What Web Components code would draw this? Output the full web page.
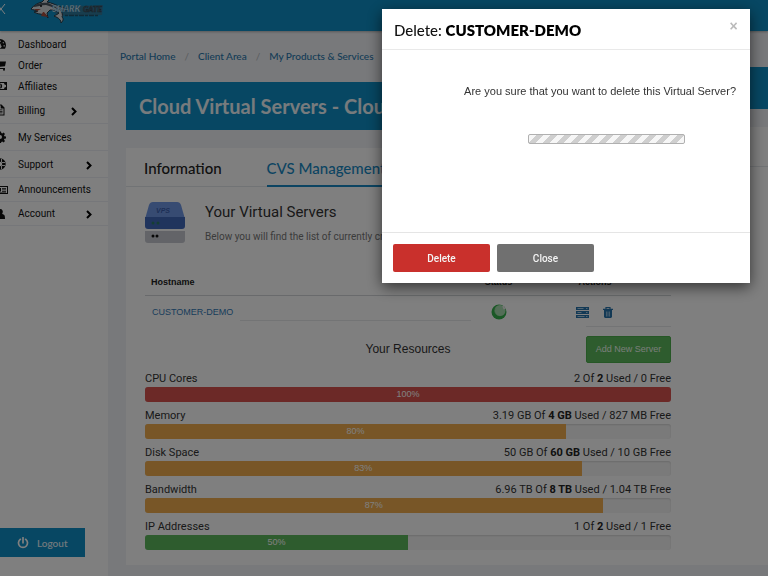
<!DOCTYPE html>
<html lang="en">
<head>
<meta charset="utf-8">
<title>Cloud Virtual Servers</title>
<style>
html, body { margin: 0; min-height: 100vh; }
body { font-family: Roboto, "Liberation Sans", sans-serif; color: #333; background: #f0f2f6; overflow: hidden; }
</style>
</head>
<body>
<client-portal></client-portal>
<script>
const define = (name, html, setup) => {
  const tpl = document.createElement('template');
  tpl.innerHTML = '<style>*{box-sizing:border-box}</style>' + html;
  customElements.define(name, class extends HTMLElement {
    constructor() {
      super();
      this.attachShadow({ mode: 'open' }).append(tpl.content.cloneNode(true));
    }
    connectedCallback() { if (setup) setup(this, this.shadowRoot); }
  });
};

const ICONS = {
  gauge: '<path fill-rule="evenodd" d="M6 1a6 6 0 0 0-6 6c0 1.500.4 2.700 1 3.800h10c.6-1.100 1-2.300 1-3.800a6 6 0 0 0-6-6zM6 2.200l1 1-1 1-1-1zM2.500 4l1 .6-.6 1-1-.6zM9.500 4l-1 .6.6 1 1-.6zM7.300 4.700l-.6 2.600a1.500 1.500 0 1 1-1-.2zM1.200 7.200h1.400v1.200H1.200zM9.500 7.200h1.300v1.200H9.500z"/>',
  cart: '<path d="M0 1.500h2.300l.4 1H12l-1 4.800-7.200.8.2.8h7v1H3.200L1.600 2.500H0z"/><circle cx="4.200" cy="10.800" r="1"/><circle cx="10" cy="10.800" r="1"/>',
  money: '<path fill-rule="evenodd" d="M-1 2h14v8H-1zM2 3a2 2 0 0 1-2 2v2a2 2 0 0 1 2 2h8a2 2 0 0 1 2-2V5a2 2 0 0 1-2-2z"/><ellipse cx="6" cy="6" rx="2.200" ry="2.600" /><path d="M5.700 4.500h.8v3h-.8z" fill="#fff"/>',
  file: '<path fill-rule="evenodd" d="M1.500.5h6L10.500 3.500v8h-9zM2.500 1.500v9h7V4.500H6.700v-3zM3.500 5.500h5v.8h-5zM3.500 7h5v.8h-5zM3.500 8.500h5v.8h-5z"/>',
  cog: '<path fill-rule="evenodd" d="M5 .5h2l.3 1.600 1 .4 1.300-1 1.400 1.400-1 1.300.4 1 1.600.3v2l-1.600.3-.4 1 1 1.300L9.600 11.500l-1.300-1-1 .4L7 12H5l-.3-1.600-1-.4-1.300 1L1 9.600l1-1.300-.4-1L0 7V5l1.600-.3.4-1-1-1.300L2.400 1l1.300 1 1-.4zM6 4a2 2 0 1 0 0 4 2 2 0 0 0 0-4z"/>',
  ring: '<circle cx="6" cy="6" r="4" fill="none" stroke="currentColor" stroke-width="3.400"/><path d="M1 4.500h3M1 7.500h3M8 4.500h3M8 7.500h3M4.500 1v3M7.500 1v3M4.500 8v3M7.500 8v3" stroke="#fff" stroke-width=".9"/>',
  news: '<path fill-rule="evenodd" d="M-1 2h15v8H0V3h-1zM1 3v6h12V3zM2 4h5v3.500H2zM8 4h4v.8H8zM8 5.500h4v.8H8zM8 7h4v.8H8zM2 8h10v.6H2z"/>',
  user: '<path d="M6 1a2.700 2.700 0 0 1 2.200 4.400C8 6 8.600 6.300 9.500 6.600c1.300.4 1.500 2.400 1.500 4.400H1c0-2 .2-4 1.500-4.400.9-.3 1.500-.6 1.300-1.200A2.700 2.700 0 0 1 6 1z"/>',
  power: '<path d="M3.400 2.300a4.500 4.500 0 1 0 5.200 0M6 .6v5.200" fill="none" stroke="currentColor" stroke-width="1.700" stroke-linecap="round"/>',
};

define('nav-item', `
<style>
:host { display: block; height: 21px; border-bottom: 1px solid #eceff5; }
:host([menu]), :host([tall]) { height: 27px; }
:host([mid]) { height: 24px; }
a { display: flex; align-items: center; height: 100%; color: #111; text-decoration: none; font-size: 10px; }
svg { width: 12px; height: 12px; margin: 0 12px 0 -6px; overflow: visible; fill: currentColor; flex: none; }
.arrow { display: none; width: 6px; height: 9px; margin: 2px 0 0 auto; fill: none; stroke: #000; stroke-width: 2; }
:host([menu]) .arrow { display: block; margin-right: 16px; }
:host([menu][near]) .arrow { margin-right: 31px; }
</style>
<a href="#"><svg class="icon" viewBox="0 0 12 12"></svg><slot></slot><svg class="arrow" viewBox="0 0 6 9"><path d="M1 1l3.500 3.500L1 8"/></svg></a>`,
(el, root) => { root.querySelector('.icon').innerHTML = ICONS[el.getAttribute('icon')]; });

define('side-nav', `
<style>
:host { display: flex; flex-direction: column; background: #fff; padding: 3px 0 19px; }
.logout { margin-top: auto; align-self: flex-start; width: 79%; height: 29px; border: 0; padding: 0 0 0 17px; display: flex; align-items: center; gap: 8px; background: #0e8fc7; color: #e8f4fa; font: 500 10px Lato, sans-serif; }
.logout svg { width: 12px; height: 12px; color: #fff; }
</style>
<nav>
<nav-item icon="gauge">Dashboard</nav-item>
<nav-item icon="cart">Order</nav-item>
<nav-item icon="money">Affiliates</nav-item>
<nav-item icon="file" menu near>Billing</nav-item>
<nav-item icon="cog" tall>My Services</nav-item>
<nav-item icon="ring" menu>Support</nav-item>
<nav-item icon="news" mid>Announcements</nav-item>
<nav-item icon="user" menu mid>Account</nav-item>
</nav>
<button class="logout"><svg viewBox="0 0 12 12">${ICONS.power}</svg>Logout</button>`);

define('top-bar', `
<style>
:host { display: flex; height: 31px; background: #0e8fc6; box-shadow: 0 1px 2px #0004; position: relative; }
button { width: 6px; height: 14px; margin: 2px 0 0; padding: 0; border: 0; background: none; overflow: hidden; }
button svg { display: block; width: 9px; height: 14px; margin-left: -3px; stroke: #fff; fill: none; }
.logo { width: 74px; height: 26px; margin-left: 25px; overflow: visible; }
</style>
<button aria-label="Close menu"><svg viewBox="0 0 9 14"><path d="M0 2l8 10M8 2L0 12"/></svg></button>
<svg class="logo" viewBox="0 0 74 26" role="img">
<path d="M20 7L72 5l-1 10-45 1z" fill="#3f708c" opacity=".7"/>
<path d="M0 9C3 5 7 3 11 2L14-1h5l-3 3c5 1 9 3 14 5 3 1 5 2 7 3l-7 0c1 3 2 5 1 7 2 2 1 4-1 6 0-3-2-5-7-7 2-1 4-2 5-3-3-2-5-3-9-3l-3 3 1 5-3-4C9 15 5 13 3 12l4-1C4 10 2 10 0 9z" fill="#d7dadd" stroke="#263744" stroke-width="1"/>
<path d="M1 7c5-4 11-5 16-4 5 2 7 4 13 7-7-2-11-4-15-5C11 5 6 7 1 7z" fill="#4b5660"/>
<path d="M3 9l7 0-4 2zM13 12l4 5-7-1 2-4z" fill="#a84c3c"/>
<circle cx="10" cy="6" r="1" fill="#111"/>
<text x="21" y="12" font-family="Lato, sans-serif" font-weight="900" font-style="italic" font-size="9" fill="#eaf6fc" stroke="#1480b4" stroke-width=".4">SHARK</text>
<text x="52" y="12" font-family="Lato, sans-serif" font-weight="900" font-style="italic" font-size="8" fill="#647886" stroke="#2c4453" stroke-width=".6">GATE</text>
<path d="M34 15.500h34" stroke="#20556f" stroke-width="1.500" stroke-dasharray="3 1 5 1"/>
</svg>`);

define('bread-crumbs', `
<style>
:host { display: block; padding: 0 12px; height: 51px; }
ol { margin: 0; padding: 0; display: flex; align-items: center; height: 50px; list-style: none; white-space: nowrap; font: 10px Lato, sans-serif; }
li + li::before { content: "/"; color: #b5bac0; padding: 0 9px; }
a { color: #2a78ad; text-decoration: none; font-weight: 500; }
</style>
<ol><li><a href="#">Portal Home</a></li><li><a href="#">Client Area</a></li><li><a href="#">My Products &amp; Services</a></li></ol>`);

define('page-banner', `
<style>
:host { display: block; background: #0e8fc6; margin-left: 18px; }
h1 { margin: 0; padding: 0 13px; font: 700 20px/48px Lato, sans-serif; color: #eef6fb; white-space: nowrap; overflow: hidden; }
</style>
<h1><slot></slot></h1>`);

define('usage-bar', `
<style>
:host { display: block; }
.row { display: flex; justify-content: space-between; font-size: 11px; line-height: 16px; height: 16px; color: #333; }
.track { height: 15px; border-radius: 3px; background: #f5f5f5; box-shadow: inset 0 1px 2px #0002; overflow: hidden; }
.fill { height: 15px; font: 9px/15px "Liberation Sans", sans-serif; color: #fff; text-align: center; }
</style>
<div class="row"><span class="label"></span><span><slot></slot></span></div>
<div class="track"><div class="fill"></div></div>`,
(el, root) => {
  const v = el.getAttribute('value'), fill = root.querySelector('.fill');
  root.querySelector('.label').textContent = el.getAttribute('label');
  fill.textContent = v + '%';
  fill.style.width = v + '%';
  fill.style.background = v >= 100 ? '#d9534f' : v > 50 ? '#f0ad4e' : '#5cb85c';
});

define('server-table', `
<style>
:host { display: block; }
table { width: 100%; border-collapse: collapse; table-layout: fixed; font: 9px "Liberation Sans", sans-serif; }
th { height: 25px; padding: 0; border-bottom: 1px solid #d2d5d9; color: #222; }
td { height: 34px; padding: 0; text-align: center; }
th:first-child { text-align: left; padding-left: 6px; }
td:first-child { text-align: left; padding-left: 7px; background: linear-gradient(#e6e8ea, #e6e8ea) 100% 24px / 71% 1px no-repeat; }
th:last-child, td:last-child { padding-right: 10px; }
td:last-child { background: linear-gradient(#e6e8ea, #e6e8ea) 100% 30px / 60% 1px no-repeat; }
.host { width: 62%; } .state { width: 11%; }
.state, .led { padding-right: 3px; }
a { color: #337ab7; text-decoration: none; }
.acts { display: flex; justify-content: center; align-items: center; gap: 14px; }
button { border: 0; background: none; padding: 0; display: block; }
svg { display: block; margin: auto; }
</style>
<table>
<thead><tr><th class="host">Hostname</th><th class="state">Status</th><th>Actions</th></tr></thead>
<tbody><tr>
<td><a href="#">CUSTOMER-DEMO</a></td>
<td class="led"><svg width="16" height="16" viewBox="0 0 16 16" role="img" aria-label="Running"><circle cx="8" cy="8" r="7.500" fill="#35b04c"/><circle cx="9" cy="6.500" r="5.500" fill="#a9dcb0"/><path d="M3.500 7a5.500 5.500 0 0 0 8 4.500A5 5 0 0 1 6 3.200 5 5 0 0 0 3.500 7z" fill="#72c77f"/><path d="M12 2l1 2.500 1.500-.5" fill="none" stroke="#eee" stroke-width="1.500"/></svg></td>
<td><div class="acts">
<button aria-label="Manage"><svg width="13" height="11" viewBox="0 0 13 11"><path d="M0 0h13v3H0zM0 4h13v3H0zM0 8h13v3H0z" fill="#2673ab"/><path d="M1.500 1.500h6M1.500 5.500h4M1.500 9.500h7M10 1.500h1.500M10 5.500h1.500M10 9.500h1.500" stroke="#a9cbe2"/></svg></button>
<button aria-label="Delete"><svg width="10" height="11" viewBox="0 0 10 11"><path d="M3 2V.5h4V2M0 2.300h10" fill="none" stroke="#2673ab" stroke-width="1.200"/><path d="M1 3h8v7l-1 1H2l-1-1z" fill="#2673ab"/><path d="M3.500 4.500v5M5 4.500v5M6.500 4.500v5" stroke="#b8d4e8" stroke-width=".7"/></svg></button>
</div></td>
</tr></tbody>
</table>`);

define('server-card', `
<style>
:host { display: block; margin: 18px 0 0 18px; background: #fff; }
.tabs { display: flex; gap: 45px; padding-left: 18px; height: 39px; border-bottom: 1px solid #e3e6ea; font: 500 15px Lato, sans-serif; }
.tabs button { border: 0; border-bottom: 2px solid transparent; background: none; padding: 3px 0 0; font: inherit; color: #222; white-space: nowrap; height: 39px; }
.tabs .on { color: #1889c4; border-color: #1889c4; padding-right: 12px; }
.body { padding: 15px 37px 15px 19px; }
.intro { display: grid; grid-template-columns: 40px 1fr; column-gap: 20px; height: 68px; }
.intro svg { display: block; width: 40px; height: 41px; }
h2 { margin: 0; font-size: 15px; line-height: 20px; font-weight: 400; color: #333; }
p { margin: 8px 0 0; font-size: 10px; line-height: 14px; color: #777; white-space: nowrap; overflow: hidden; }
.head { display: grid; grid-template-columns: 1fr auto 1fr; align-items: center; margin-top: 6px; height: 28px; }
h3 { grid-column: 2; margin: 0; font: 12px "Liberation Sans", sans-serif; color: #333; }
.head button { justify-self: end; width: 85px; height: 27px; border: 1px solid #4cae4c; border-radius: 2px; background: #5cb85c; color: #f2fbf2; font: 9px "Liberation Sans", sans-serif; padding: 0; white-space: nowrap; }
.bars { display: grid; gap: 6px; margin-top: 8px; }
b { color: #222; }
</style>
<div class="tabs"><button>Information</button><button class="on">CVS Management</button></div>
<div class="body">
<div class="intro">
<svg viewBox="0 0 40 41" role="img"><path d="M4 3q1-3 4-3h24q3 0 4 3l4 14H0z" fill="#6f96e4"/><path d="M0 15h40v9q0 3-3 3H3q-3 0-3-3z" fill="#4169bb"/><path d="M0 29h40v9q0 3-3 3H3q-3 0-3-3z" fill="#c6c9d0"/><text x="11" y="11" font-family="Liberation Sans" font-style="italic" font-weight="700" font-size="7" fill="#3a5fae">VPS</text><g fill="#2b7d66"><circle cx="8" cy="21" r="1.500"/><circle cx="13" cy="21" r="1.500"/></g><g fill="#111"><circle cx="8" cy="34" r="1.500"/><circle cx="12" cy="34" r="1.500"/></g></svg>
<div><h2>Your Virtual Servers</h2><p>Below you will find the list of currently created servers.</p></div>
</div>
<server-table></server-table>
<div class="head"><h3>Your Resources</h3><button>Add New Server</button></div>
<div class="bars">
<usage-bar label="CPU Cores" value="100">2 Of <b>2</b> Used / 0 Free</usage-bar>
<usage-bar label="Memory" value="80">3.19 GB Of <b>4 GB</b> Used / 827 MB Free</usage-bar>
<usage-bar label="Disk Space" value="83">50 GB Of <b>60 GB</b> Used / 10 GB Free</usage-bar>
<usage-bar label="Bandwidth" value="87">6.96 TB Of <b>8 TB</b> Used / 1.04 TB Free</usage-bar>
<usage-bar label="IP Addresses" value="50">1 Of <b>2</b> Used / 1 Free</usage-bar>
</div>
</div>`);

define('page-edge', `
<style>
:host { display: grid; grid-template-rows: 36px 42px 18px 40px 1fr; }
.band { grid-row: 2; background: #0e8fc6; }
.tabline { grid-row: 4; background: #fff; border-bottom: 1px solid #e3e6ea; }
.fill { grid-row: 5; background: #fff; }
</style>
<div class="band"></div><div class="tabline"></div><div class="fill"></div>`);

define('confirm-dialog', `
<style>
:host { position: fixed; inset: 0; background: #00000080; padding: 9px 18px; display: flex; align-items: flex-start; justify-content: flex-end; }
section { width: calc(50% + 2px); background: #fff; box-shadow: 0 4px 14px #00000099; }
header { display: flex; justify-content: space-between; height: 41px; padding: 0 12px; border-bottom: 1px solid #e9e9e9; }
h2 { margin: 0; font: 500 15px/42px Lato, sans-serif; color: #111; }
h2 ::slotted(b) { font-weight: 800; color: #000; }
.x { border: 0; background: none; padding: 0; width: 9px; height: 35px; font: 700 14px/35px "Liberation Sans", sans-serif; color: #bbb; }
.body { height: 182px; padding: 34px 14px 0; display: flex; flex-direction: column; align-items: flex-end; }
p { margin: 0; font: 11px/15px "Liberation Sans", sans-serif; color: #333; }
.wait { width: 157px; height: 10px; margin: 35px 51px 0 0; border: 1px solid #b0b0b0; border-radius: 2px; background: repeating-linear-gradient(135deg, #f6f6f6 0 5px, #cfcfcf 5px 10px); }
footer { display: flex; gap: 7px; padding: 11px 11px 11px; border-top: 1px solid #e5e5e5; }
footer button { width: 97px; height: 28px; border: 0; border-radius: 2px; font: 500 10px Roboto, sans-serif; color: #f4f4f4; background: #707070; padding: 0; }
footer .danger { background: #c9302c; }
</style>
<section role="dialog" aria-modal="true" aria-labelledby="t">
<header><h2 id="t"><slot name="title"></slot></h2><button class="x" aria-label="Close dialog">×</button></header>
<div class="body"><p><slot></slot></p><div class="wait" role="progressbar" aria-label="Working"></div></div>
<footer><button class="danger">Delete</button><button>Close</button></footer>
</section>`);

define('client-portal', `
<style>
:host { display: grid; grid-template: auto 1fr / 108px 1fr; min-height: 100vh; }
top-bar { grid-column: 1 / -1; z-index: 1; }
main { display: grid; grid-template-columns: 1fr 60px; padding-bottom: 11px; align-content: start; min-width: 0; }
.col { min-width: 0; }
confirm-dialog { z-index: 2; }
</style>
<top-bar></top-bar>
<side-nav></side-nav>
<main>
<div class="col">
<bread-crumbs></bread-crumbs>
<page-banner>Cloud Virtual Servers - Cloud VPS</page-banner>
<server-card></server-card>
</div>
<page-edge></page-edge>
</main>
<confirm-dialog><span slot="title">Delete: </span><b slot="title">CUSTOMER-DEMO</b>Are you sure that you want to delete this Virtual Server?</confirm-dialog>`);
</script>
</body>
</html>
